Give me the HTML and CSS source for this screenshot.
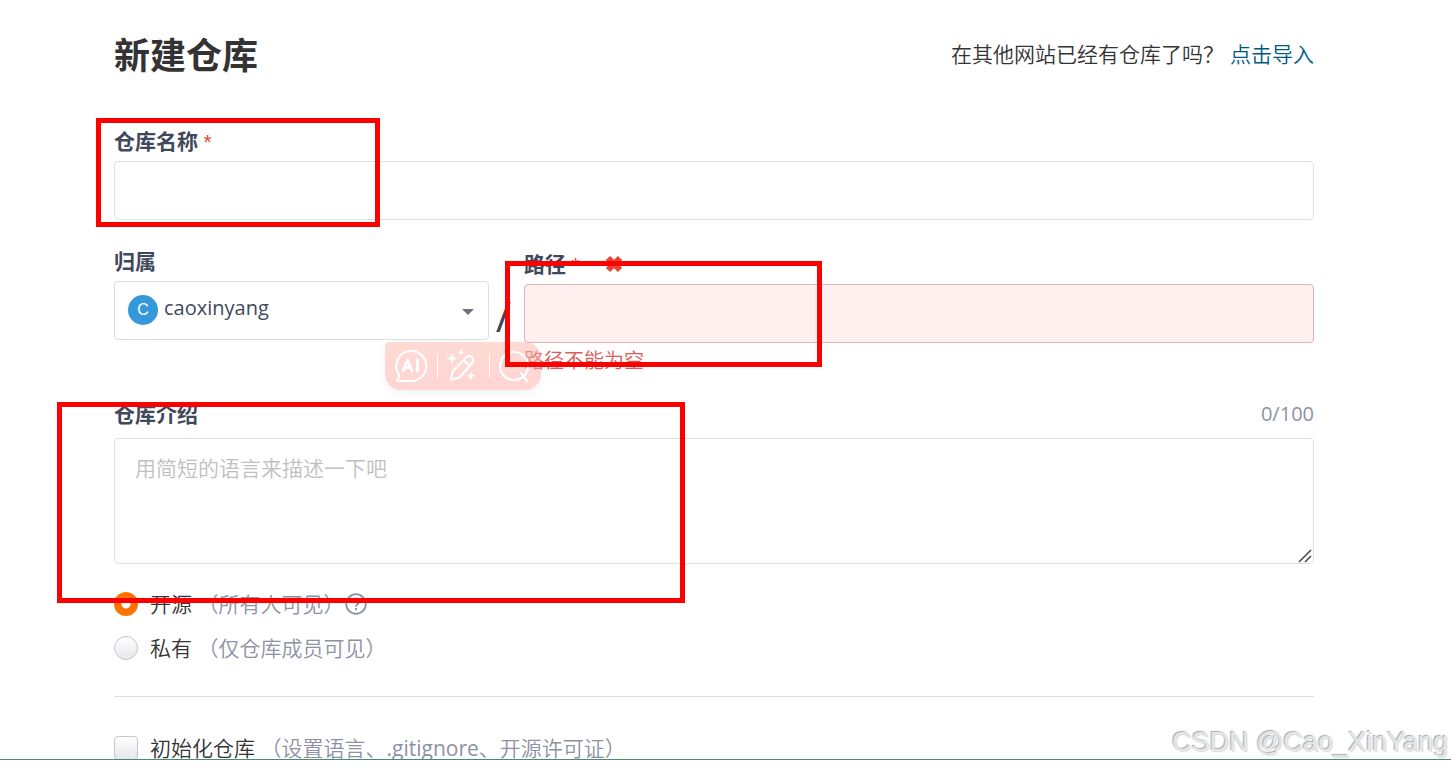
FILE: index.html
```html
<!DOCTYPE html>
<html lang="zh-CN">
<head>
    <meta charset="UTF-8">
    <meta name="viewport" content="width=device-width, initial-scale=1.0">
    <title>新建仓库</title>
    <link rel="stylesheet" href="styles.css">
</head>
<body>
    <div class="page">
        <div class="container">
            <header class="page-header">
                <h1>新建仓库</h1>
                <p class="import-tip">在其他网站已经有仓库了吗？<a href="#">点击导入</a></p>
            </header>

            <form>
                <div class="field">
                    <label class="title" for="name">仓库名称 <span class="required">*</span></label>
                    <input class="control" type="text" id="name">
                    <span class="mark mark-name"></span>
                </div>

                <div class="field path-row">
                    <div class="owner">
                        <label class="title" for="owner">归属</label>
                        <div class="select-wrap">
                            <select class="control" id="owner">
                                <option>caoxinyang</option>
                            </select>
                            <span class="avatar">C</span>
                            <svg class="caret" width="12" height="6" viewBox="0 0 12 6"><path d="M0 0h12L6 6z" fill="#6b7080"/></svg>
                        </div>
                    </div>
                    <span class="slash">/</span>
                    <div class="path">
                        <label class="title" for="path">路径 <span class="required">*</span>
                            <svg class="cross" width="18" height="18" viewBox="0 0 18 18"><path d="M3 3l12 12M15 3L3 15" stroke="#f04134" stroke-width="6"/></svg>
                        </label>
                        <input class="control invalid" type="text" id="path">
                        <p class="error">路径不能为空</p>
                        <span class="mark mark-path"></span>
                    </div>

                    <!-- Floating AI toolbar -->
                    <div class="ai-bar">
                        <button type="button" aria-label="AI">
                            <svg width="34" height="34" viewBox="0 0 34 34" fill="none" stroke="#fff" stroke-width="2.200" stroke-linecap="round" stroke-linejoin="round">
                                <path d="M4 24A15 15 0 1 1 17 32H4c-1 0-1-1 0-2 1-1 2-2 0-6z"/>
                                <path d="M9 22l4.500-11L18 22M11 18.500h5M23.500 11v11" stroke-width="2.800"/>
                            </svg>
                        </button>
                        <button type="button" aria-label="润色">
                            <svg width="34" height="34" viewBox="0 0 34 34" fill="none" stroke="#fff" stroke-width="2.200" stroke-linejoin="round">
                                <path d="M20 8.500a4 4 0 0 1 6 5.500L13.500 28.500 5 31l1.500-8.500zM18 11.500l6 5.500"/>
                                <path d="M6 4l1.500 4 4 1.500-4 1.500L6 15l-1.500-4-4-1.500 4-1.500zM15 0l1 2.500 2.500 1-2.500 1-1 2.500-1-2.500-2.500-1 2.500-1zM25 22l1.200 3.500 3.500 1.200-3.500 1.200L25 31.500l-1.200-3.600-3.500-1.200 3.500-1.200z" fill="#fff" stroke="none"/>
                            </svg>
                        </button>
                        <button type="button" aria-label="搜索">
                            <svg width="34" height="34" viewBox="0 0 34 34" fill="none" stroke="#fff" stroke-width="2.200" stroke-linecap="round">
                                <circle cx="16" cy="17" r="14"/>
                                <path d="M23 24l6 8"/>
                            </svg>
                        </button>
                    </div>
                </div>

                <div class="field">
                    <div class="title-row">
                        <label class="title" for="desc">仓库介绍</label>
                        <span class="count">0/100</span>
                    </div>
                    <textarea class="control" id="desc" placeholder="用简短的语言来描述一下吧"></textarea>
                    <svg class="grip" width="14" height="14" viewBox="0 0 14 14" stroke="#444" stroke-width="1.500"><path d="M1 13L13 1M7 13l6-6"/></svg>
                    <span class="mark mark-desc"></span>
                </div>

                <div class="choices">
                    <div class="choice">
                        <input type="radio" name="visibility" id="public" checked>
                        <label for="public">开源 <span class="hint">（所有人可见）</span></label>
                        <svg class="help" width="22" height="22" viewBox="0 0 22 22" fill="none" stroke="#8c92a4" stroke-width="1.800">
                            <circle cx="11" cy="11" r="9.800"/>
                            <path d="M8 8.500a3 3 0 1 1 4.500 2.600c-1 .6-1.500 1-1.500 2.400M11 15v2"/>
                        </svg>
                    </div>
                    <div class="choice">
                        <input type="radio" name="visibility" id="private">
                        <label for="private">私有 <span class="hint">（仅仓库成员可见）</span></label>
                    </div>
                </div>

                <div class="choice init">
                    <input type="checkbox" id="init">
                    <label for="init">初始化仓库 <span class="hint">（设置语言、<span class="file">.gitignore</span>、开源许可证）</span></label>
                </div>
            </form>
        </div>
        <div class="watermark">CSDN @Cao_XinYang</div>
    </div>
</body>
</html>
```
FILE: styles.css
```css
* {
    box-sizing: border-box;
}
body {
    margin: 0;
    overflow: hidden;
    background-color: #fff;
    color: #333;
    font-family: "Open Sans", "Noto Sans CJK SC", sans-serif;
    font-size: 21px;
    font-weight: 350;
    line-height: 28px;
}
.page {
    position: relative;
    height: calc(100vh - 8px);
    border-bottom: 1px solid #4b8b76;
    overflow: hidden;
}
.container {
    margin: 0 137px 0 114px;
    padding-top: 30px;
}
h1, p {
    margin: 0;
}
h1 {
    font-size: 36px;
    line-height: 52px;
}
.page-header {
    display: flex;
    justify-content: space-between;
    margin-bottom: 46px;
}
.import-tip {
    line-height: 48px;
}
a {
    margin-left: 6px;
    color: #005980;
    text-decoration: none;
}
.field {
    position: relative;
    margin-bottom: 26px;
}
.title {
    display: block;
    height: 26px;
    margin-bottom: 7px;
    color: #40485b;
    font-weight: bold;
    line-height: 26px;
}
.required {
    color: #f04134;
    font-family: "Liberation Sans", sans-serif;
    font-weight: normal;
    line-height: 20px;
}
.control {
    display: block;
    width: 100%;
    height: 59px;
    padding: 0 20px;
    border: 1px solid #dfe1e8;
    border-radius: 4px;
    background-color: #fff;
    color: #40485b;
    font: inherit;
    outline: none;
}
.path-row {
    display: grid;
    grid-template-columns: 375px 35px 1fr;
    margin-top: 28px;
}
.select-wrap {
    position: relative;
}
select.control {
    appearance: none;
    padding: 0 40px 6px 49px;
    border-color: #d9dfe6;
    font-size: 20px;
    font-weight: normal;
}
.avatar {
    position: absolute;
    left: 14px;
    top: 14px;
    width: 30px;
    height: 30px;
    border-radius: 50%;
    background-color: #3498db;
    color: #fff;
    font: 16px/30px "Liberation Sans", sans-serif;
    text-align: center;
    pointer-events: none;
}
.caret {
    position: absolute;
    right: 15px;
    top: 28px;
    pointer-events: none;
}
.slash {
    padding: 54px 6px 0 0;
    color: #40485b;
    font-size: 42px;
    font-weight: normal;
    text-align: center;
}
.path {
    position: relative;
    padding-top: 3px;
}
.cross {
    margin-left: 20px;
    vertical-align: -1px;
}
.control.invalid {
    border-color: #e0b4b4;
    background-color: #ffefef;
}
.error {
    margin-top: 4px;
    color: #db5a5a;
    font-size: 20px;
    line-height: 28px;
}
.title-row {
    display: flex;
    justify-content: space-between;
    margin-bottom: 11px;
    line-height: 26px;
}
.title-row .title {
    margin: 0;
}
.count {
    color: #8c92a4;
    font-size: 20px;
    font-weight: normal;
}
textarea.control {
    height: 126px;
    padding: 15px 20px;
    resize: none;
}
textarea::placeholder {
    color: #bfbfbf;
}
.grip {
    position: absolute;
    right: 2px;
    bottom: 1px;
    pointer-events: none;
}

/* Red highlight frames over the fields */
.mark {
    position: absolute;
    z-index: 2;
    border: 5px solid #f00;
    pointer-events: none;
}
.mark-name {
    left: -18px;
    top: -10px;
    width: 284px;
    height: 109px;
}
.mark-path {
    left: -19px;
    top: 13px;
    width: 317px;
    height: 106px;
}
.mark-desc {
    left: -57px;
    top: 1px;
    width: 628px;
    height: 201px;
}

.ai-bar {
    position: absolute;
    left: 271px;
    top: 94px;
    z-index: 1;
    display: flex;
    width: 156px;
    height: 48px;
    border-radius: 4px 16px 16px 16px;
    background: linear-gradient(rgba(255, 182, 168, 0.5), rgba(255, 170, 170, 0.5));
    box-shadow: 0 4px 10px rgba(0, 0, 0, 0.05);
}
.ai-bar button {
    position: relative;
    flex: 1;
    display: flex;
    align-items: center;
    justify-content: center;
    padding: 0;
    border: none;
    background: none;
    cursor: pointer;
}
.ai-bar button + button::before {
    content: "";
    position: absolute;
    left: 0;
    top: 12px;
    width: 1px;
    height: 24px;
    background-color: #fff;
}

.choices {
    display: grid;
    gap: 16px;
    padding-bottom: 34px;
    border-bottom: 1px solid #dce1e8;
}
.choice {
    display: flex;
    align-items: center;
}
.choice input {
    appearance: none;
    width: 24px;
    height: 24px;
    margin: 0 12px 0 0;
    border: 1px solid #c4c6cc;
    border-radius: 4px;
    background: linear-gradient(#fff, #e6e7ed);
}
.choice input[type="radio"] {
    border-radius: 50%;
}
.choice input[type="radio"]:checked {
    border: none;
    background: radial-gradient(circle, #fff 4px, #fe7300 5px);
}
.hint {
    color: #8c92a4;
}
.file {
    font-weight: normal;
}
.help {
    margin-left: 1px;
}
.init {
    margin-top: 37px;
}
.watermark {
    position: absolute;
    right: 3px;
    bottom: 2px;
    color: #e6e6e6;
    font: 27px/30px "Liberation Sans", sans-serif;
    text-shadow: -1px -1px 1px #aaa, 1px 1px 1px #ddd;
}
```
